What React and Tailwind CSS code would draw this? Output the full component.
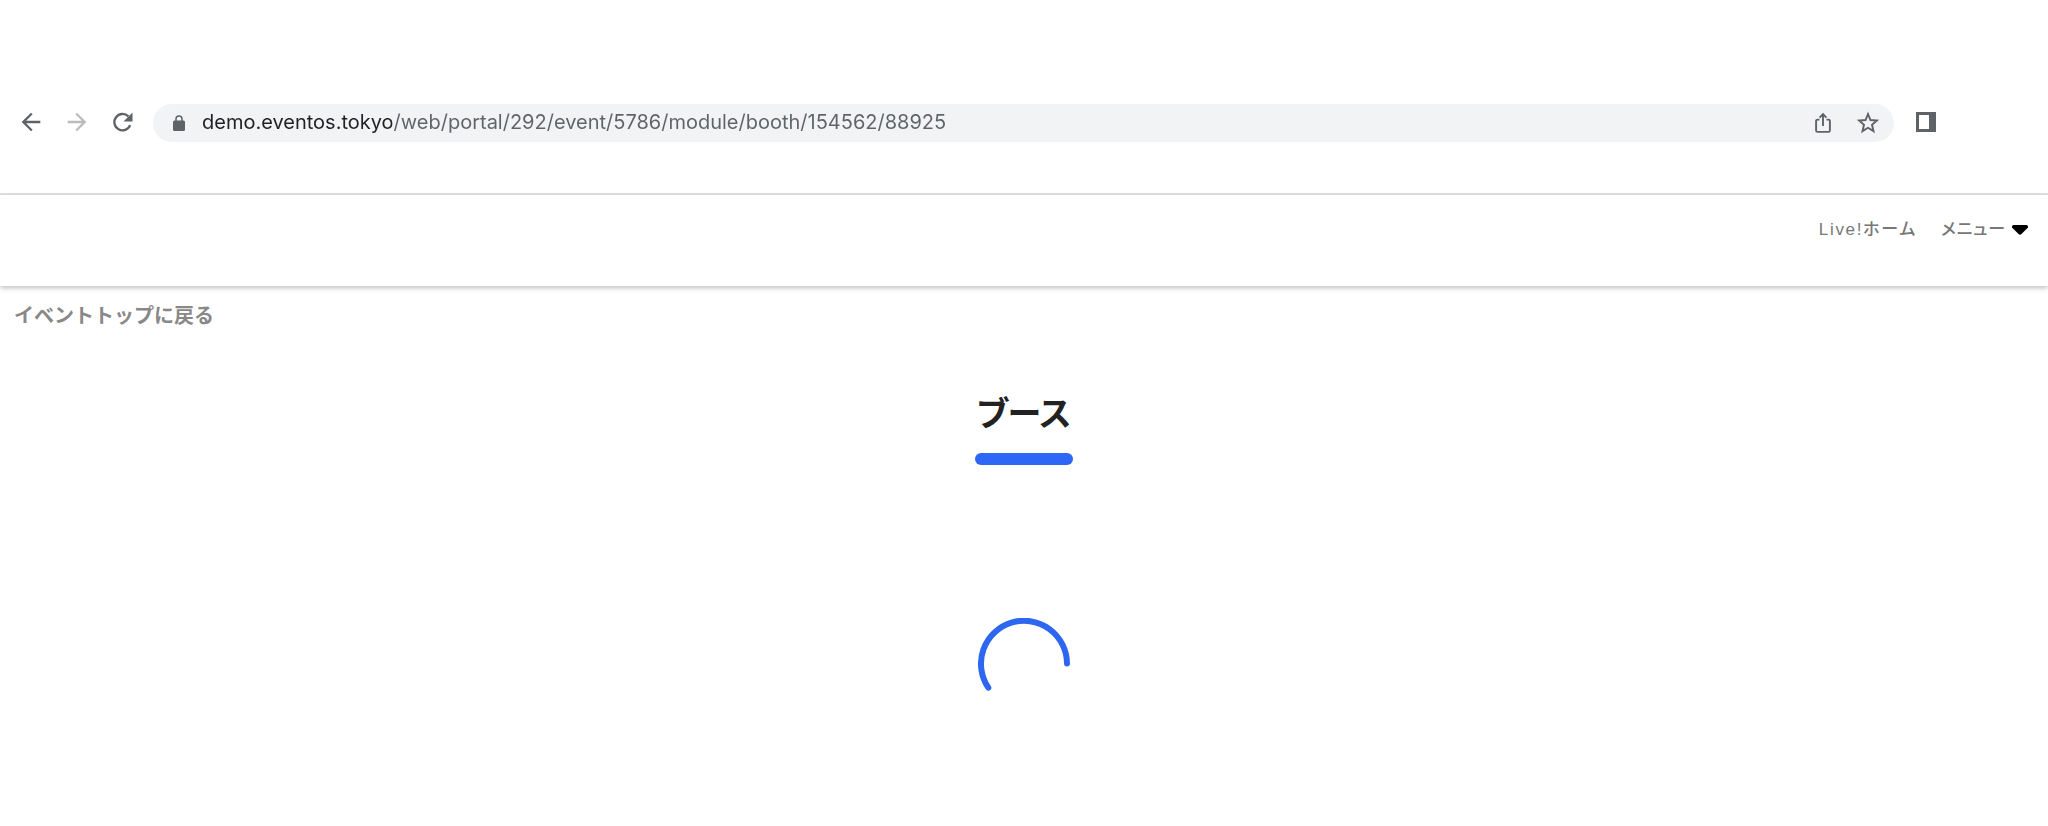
import { MdArrowBack, MdArrowForward } from 'react-icons/md';

function ReloadIcon() {
    return (
        <svg width="28" height="28" viewBox="0 0 28 28" fill="none" aria-hidden="true">
            <path d="M21.2 17.2A8.2 8.2 0 1 1 19.4 8.4" stroke="currentColor" strokeWidth="2.3" />
            <path d="M23.5 4.6v9h-9z" fill="currentColor" />
        </svg>
    );
}

function LockIcon() {
    return (
        <svg width="12" height="16" viewBox="0 0 12 16" className="mr-[17px] ml-[3px] shrink-0" aria-hidden="true">
            <rect y="5.5" width="12" height="10.5" rx="1.5" fill="#5f6368" />
            <path d="M3 6.5V4a3 3 0 0 1 6 0v2.5" fill="none" stroke="#5f6368" strokeWidth="1.5" />
        </svg>
    );
}

function ShareIcon() {
    return (
        <svg width="22" height="22" viewBox="0 0 22 22" fill="none" stroke="currentColor" strokeWidth="1.9" aria-hidden="true">
            <path d="M7.5 7.6H5.6a1.5 1.5 0 0 0-1.5 1.5v9.3a1.5 1.5 0 0 0 1.5 1.5h10.8a1.5 1.5 0 0 0 1.5-1.5V9.1a1.5 1.5 0 0 0-1.5-1.5h-1.9" />
            <path d="M11 14V2.5M7.6 5.6 11 2.2l3.4 3.4" />
        </svg>
    );
}

function StarIcon() {
    return (
        <svg width="24" height="24" viewBox="2 2 20 20" fill="none" stroke="currentColor" strokeWidth="1.6" aria-hidden="true">
            <path d="M12 4.5 14.05 9.5 19.4 9.95 15.35 13.5 16.6 18.8 12 16 7.4 18.8 8.65 13.5 4.6 9.95 9.95 9.5Z" />
        </svg>
    );
}

function SidePanelIcon() {
    return (
        <svg width="20" height="20" viewBox="0 0 20 20" aria-hidden="true">
            <path fill="#5f6368" fillRule="evenodd" d="M0 0h20v20H0zM3 3v14h10V3z" />
        </svg>
    );
}

function Spinner() {
    return (
        <svg width="92" height="92" viewBox="0 0 92 92" fill="none" role="status" aria-label="読み込み中">
            <path d="M10.3 69.7A43 43 0 1 1 89 45.5" stroke="#2d67ef" strokeWidth="6" strokeLinecap="round" />
        </svg>
    );
}

function BrowserBar() {
    return (
        <div className="flex items-center border-b-2 border-[#e2e2e2] pt-[104px] pr-28 pb-[51px] pl-[17px] text-[#5f6368]">
            <div className="flex gap-[18px] pr-4 pb-0.5">
                <button type="button" aria-label="戻る">
                    <MdArrowBack size={28} />
                </button>
                <button type="button" aria-label="進む" className="text-[#babcbe]">
                    <MdArrowForward size={28} />
                </button>
                <button type="button" aria-label="再読み込み">
                    <ReloadIcon />
                </button>
            </div>

            {/* Address bar */}
            <div className="flex h-[38px] grow items-center rounded-full bg-[#f1f3f4] pr-3.5 pl-[17px]">
                <LockIcon />
                {/* Host is dark, the path after it is gray */}
                <input
                    type="text"
                    aria-label="アドレス"
                    defaultValue="demo.eventos.tokyo/web/portal/292/event/5786/module/booth/154562/88925"
                    className="h-7 min-w-0 grow bg-linear-to-r from-[#202124] from-[190px] to-[#5f6368] to-[190px] bg-clip-text pb-0.5 font-['Inter',sans-serif] text-[20px] text-transparent outline-none"
                />
                <div className="flex items-center gap-[22px]">
                    <button type="button" aria-label="共有">
                        <ShareIcon />
                    </button>
                    <button type="button" aria-label="ブックマーク">
                        <StarIcon />
                    </button>
                </div>
            </div>

            <button type="button" aria-label="サイドパネル" className="ml-[22px] pb-0.5">
                <SidePanelIcon />
            </button>
        </div>
    );
}

function SiteHeader() {
    return (
        <header className="h-[91px] bg-white pt-[23px] pr-5 shadow-[0_2px_5px_rgba(0,0,0,0.25)]">
            <nav className="flex items-center justify-end gap-6 text-[17px] leading-6 font-medium text-[#777] [font-feature-settings:'palt']">
                <a href="#home" className="tracking-widest">Live!ホーム</a>
                <button type="button" className="flex items-center gap-1.5 tracking-wider">
                    メニュー
                    <svg width="16" height="10" viewBox="0 0 16 10" aria-hidden="true">
                        <path d="M1.5 0h13q1.5 0 1.5 1.5v1L9.5 9q-1.5 1.4-3 0L0 2.5v-1Q0 0 1.5 0z" fill="#000" />
                    </svg>
                </button>
            </nav>
        </header>
    );
}

export default function App() {
    return (
        <div className="min-h-screen bg-white font-['Liberation_Sans','Noto_Sans_CJK_JP',sans-serif]">
            <BrowserBar />
            <SiteHeader />
            <main>
                <a href="#top" className="ml-3.5 inline-block pt-4 text-[20px] leading-7 font-bold text-[#888]">
                    イベントトップに戻る
                </a>
                <div className="flex flex-col items-center pt-[57px]">
                    <h1 className="text-[34px] leading-[54px] font-bold text-[#222] [font-feature-settings:'palt']">ブース</h1>
                    <div className="mt-3 h-3 w-[98px] rounded-full bg-[#2d67f6]" />
                    <div className="pt-[153px]">
                        <Spinner />
                    </div>
                </div>
            </main>
        </div>
    );
}
